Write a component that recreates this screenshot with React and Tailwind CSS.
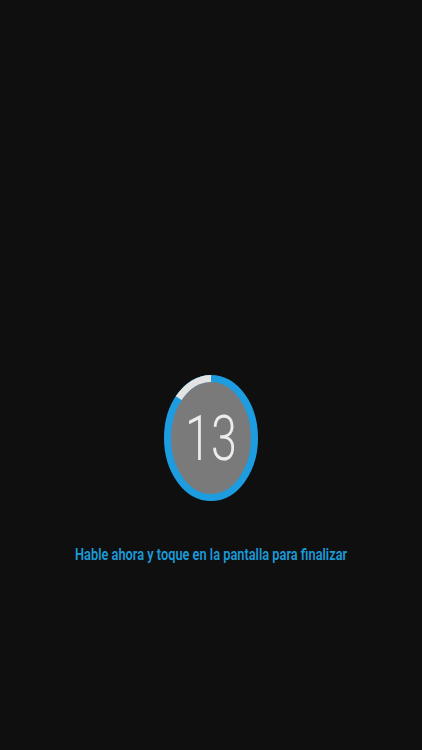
import React from 'react';

const RecordingRing = ({ seconds }) => (
  <div className="relative w-[94px] h-[126px]">
    <svg width="94" height="126" viewBox="0 0 94 126" className="block">
      <ellipse cx="47" cy="63" rx="43.5" ry="59.5" fill="#7a7a7a" stroke="#1d9ce0" strokeWidth="7" />
      <path d="M14.7 23.2 A43.5 59.5 0 0 1 47 3.5" fill="none" stroke="#e3e3e3" strokeWidth="7" />
    </svg>
    <div className="absolute inset-0 flex items-center justify-center">
      <span className="block scale-x-[0.74] text-[63px] leading-none font-light text-[#ececec] [font-family:Roboto,'Noto_Sans',sans-serif]">
        {seconds}
      </span>
    </div>
  </div>
);

const App = () => (
  <div className="w-full h-[750px] bg-[#0f0f0f] flex flex-col items-center pt-[375px] overflow-hidden">
    <RecordingRing seconds={13} />
    <p className="mt-[44px] whitespace-nowrap scale-x-[0.8] text-[16px] leading-[20px] font-semibold text-[#1a9ad8] [font-family:Roboto,'Noto_Sans',sans-serif]">
      Hable ahora y toque en la pantalla para finalizar
    </p>
  </div>
);

export default App;
